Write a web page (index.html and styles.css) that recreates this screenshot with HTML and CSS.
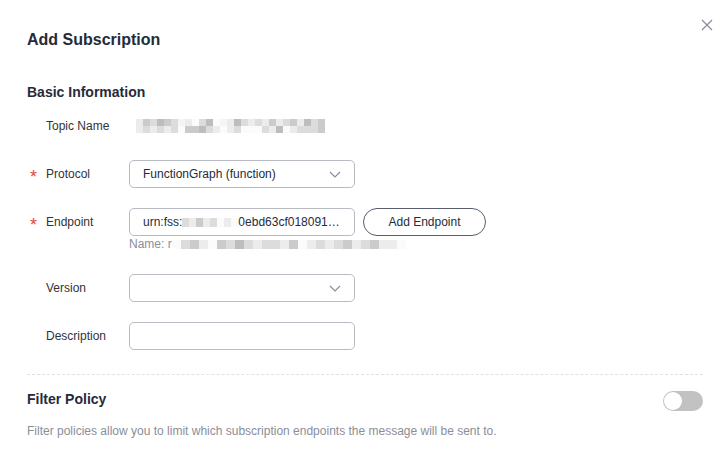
FILE: index.html
```html
<!DOCTYPE html>
<html lang="en">
<head>
<meta charset="utf-8">
<title>Add Subscription</title>
<link rel="stylesheet" href="styles.css">
</head>
<body>
<div class="dialog">
  <button class="close" aria-label="Close">
    <svg width="12" height="12" viewBox="0 0 12 12"><path d="M1 1L11 11M11 1L1 11" stroke="#8a8e99" stroke-width="1.3" fill="none"/></svg>
  </button>
  <h1 class="title">Add Subscription</h1>
  <h2 class="section">Basic Information</h2>

  <div class="row row-topic">
    <div class="label">Topic Name</div>
    <div class="blur blur-topic">
      <div class="blur-line">
        <i class="b1"></i><i class="b3"></i><i class="b2"></i><i class="b4"></i><i class="b3"></i><i class="b2"></i><i class="b5"></i><i class="b1"></i><i class="b0"></i><i class="b2"></i><i class="b4"></i><i class="b0"></i><i class="b5"></i><i class="b1"></i><i class="b4"></i><i class="b2"></i><i class="b1"></i><i class="b2"></i><i class="b1"></i><i class="b3"></i><i class="b1"></i><i class="b2"></i><i class="b3"></i><i class="b1"></i><i class="b4"></i><i class="b2"></i><i class="b3"></i>
      </div>
      <div class="blur-line">
        <i class="b1"></i><i class="b2"></i><i class="b1"></i><i class="b2"></i><i class="b1"></i><i class="b2"></i><i class="b0"></i><i class="b3"></i><i class="b3"></i><i class="b4"></i><i class="b2"></i><i class="b1"></i><i class="b0"></i><i class="b1"></i><i class="b2"></i><i class="b0"></i><i class="b0"></i><i class="b0"></i><i class="b2"></i><i class="b1"></i><i class="b4"></i><i class="b0"></i><i class="b1"></i><i class="b2"></i><i class="b2"></i><i class="b2"></i><i class="b3"></i>
      </div>
    </div>
  </div>

  <div class="row">
    <div class="label"><span class="star">*</span>Protocol</div>
    <div class="field select">
      <span class="value">FunctionGraph (function)</span>
      <svg class="chev" width="12" height="7" viewBox="0 0 12 7"><path d="M1 1L6 6L11 1" stroke="#8a8e99" stroke-width="1.2" fill="none"/></svg>
    </div>
  </div>

  <div class="row row-endpoint">
    <div class="label"><span class="star">*</span>Endpoint</div>
    <div class="endpoint-col">
      <div class="endpoint-line">
        <div class="field">
          <span class="value">urn:fss:<span class="blur-inline"><i class="b2"></i><i class="b1"></i><i class="b3"></i><i class="b1"></i><i class="b2"></i><i class="b0"></i><i class="b1"></i><i class="b0"></i></span>0ebd63cf018091…</span>
        </div>
        <button class="btn">Add Endpoint</button>
      </div>
      <div class="hint">Name: r<span class="blur-inline small"><i class="b0"></i><i class="b2"></i><i class="b3"></i><i class="b1"></i><i class="b0"></i><i class="b3"></i><i class="b2"></i><i class="b4"></i><i class="b2"></i><i class="b1"></i><i class="b2"></i><i class="b2"></i><i class="b1"></i><i class="b3"></i><i class="b0"></i><i class="b1"></i><i class="b2"></i><i class="b1"></i><i class="b2"></i><i class="b3"></i><i class="b1"></i><i class="b2"></i><i class="b3"></i><i class="b1"></i><i class="b1"></i><i class="b0"></i></span></div>
    </div>
  </div>

  <div class="row">
    <div class="label">Version</div>
    <div class="field select">
      <span class="value"></span>
      <svg class="chev" width="12" height="7" viewBox="0 0 12 7"><path d="M1 1L6 6L11 1" stroke="#8a8e99" stroke-width="1.2" fill="none"/></svg>
    </div>
  </div>

  <div class="row">
    <div class="label">Description</div>
    <div class="field"></div>
  </div>

  <div class="divider"></div>

  <div class="filter-head">
    <h2 class="section nomargin">Filter Policy</h2>
    <span class="toggle"><span class="knob"></span></span>
  </div>
  <p class="desc">Filter policies allow you to limit which subscription endpoints the message will be sent to.</p>
</div>
</body>
</html>
```

FILE: styles.css
```css
* { box-sizing: border-box; }
html, body { margin: 0; padding: 0; background: #fff; }
body {
  font-family: "Liberation Sans", Arial, sans-serif;
  font-size: 12px;
  color: #252b3a;
}
.dialog {
  position: relative;
  width: 725px;
  height: 467px;
  padding: 28px 22px 0 27px;
}
.close {
  position: absolute;
  top: 18px;
  right: 11px;
  width: 14px;
  height: 14px;
  padding: 0;
  border: 0;
  background: none;
  display: flex;
  align-items: center;
  justify-content: center;
}
.title {
  margin: 0;
  font-size: 16px;
  line-height: 24px;
  font-weight: bold;
  color: #252b3a;
}
.section {
  margin: 28px 0 0;
  font-size: 14px;
  line-height: 24px;
  font-weight: bold;
  color: #252b3a;
}
.section.nomargin { margin: 0; }
.row {
  display: flex;
  align-items: flex-start;
  margin-top: 20px;
}
.row-topic { margin-top: 8px; align-items: center; height: 28px; }
.label {
  width: 102px;
  flex: none;
  height: 28px;
  line-height: 28px;
  padding-left: 19px;
  position: relative;
  color: #333;
}
.star {
  position: absolute;
  left: 3px;
  top: 3px;
  line-height: 28px;
  color: #e54545;
  font-size: 18px;
}
.field {
  width: 226px;
  height: 28px;
  border: 1px solid #b8bbc2;
  border-radius: 5px;
  padding: 0 13px;
  display: flex;
  align-items: center;
  justify-content: space-between;
  flex: none;
  color: #252b3a;
}
.value { white-space: nowrap; display: flex; align-items: center; }
.endpoint-col { display: flex; flex-direction: column; }
.endpoint-line { display: flex; gap: 8px; }
.btn {
  width: 123px;
  height: 28px;
  border: 1px solid #575d6c;
  border-radius: 14px;
  background: #fff;
  font-family: "Liberation Sans", Arial, sans-serif;
  font-size: 12px;
  color: #252b3a;
  padding: 0;
}
.hint {
  line-height: 16px;
  color: #8a8e99;
  display: flex;
  align-items: center;
  margin-bottom: 22px;
}
.row-endpoint + .row { margin-top: 0; }
.blur-topic {
  margin-left: 7px;
  display: flex;
  flex-direction: column;
}
.blur-line { display: flex; }
.blur-line i { display: block; width: 7px; height: 7px; }
.blur-inline { display: inline-flex; }
.blur-inline i { display: block; width: 7px; height: 9px; }
.blur-inline.small i { width: 9px; height: 9px; }
.b0 { background: #fbfbfb; }
.b1 { background: #ececec; }
.b2 { background: #dcdcdc; }
.b3 { background: #cbcbcb; }
.b4 { background: #bdbdbd; }
.b5 { background: #f4f4f4; }
.divider {
  margin-top: 24px;
  border-top: 1px dashed #dfe1e6;
}
.filter-head {
  margin-top: 12px;
  display: flex;
  justify-content: space-between;
  align-items: center;
  height: 24px;
}
.toggle {
  width: 40px;
  height: 20px;
  border-radius: 10px;
  background: #c2c2c2;
  position: relative;
  margin-top: 4px;
}
.knob {
  position: absolute;
  left: 1px;
  top: 1px;
  width: 18px;
  height: 18px;
  border-radius: 50%;
  background: #fff;
}
.desc {
  margin: 11px 0 0;
  line-height: 18px;
  color: #8a8e99;
}
```
